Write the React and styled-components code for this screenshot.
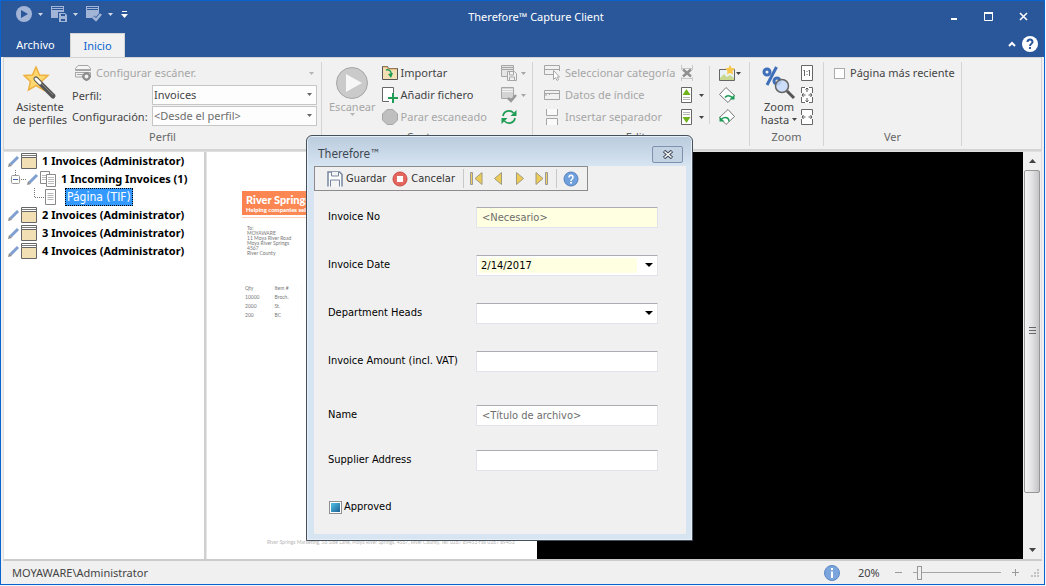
import React from "react";
import styled, { createGlobalStyle, css } from "styled-components";

const Global = createGlobalStyle`
  *, *::before, *::after { box-sizing: border-box; }
  body { margin: 0; background: #fff; }
  button, input, select { font: inherit; color: inherit; margin: 0; }
  button { border: 0; padding: 0; background: none; }
  svg { display: block; flex: none; }
`;

const Desktop = styled.div`
  min-height: 100vh;
  padding: 0 1px 1px 0;
  display: flex;
  background: #eef4fb;
  font: 11px/14px "Noto Sans", "Open Sans", sans-serif;
  color: #444;
`;
const Window = styled.div`
  position: relative;
  flex: 1;
  min-width: 0;
  display: flex;
  flex-direction: column;
  border: 1px solid #0a64cf;
  background: #f0f0f0;
`;

/* Title bar and tabs */
const TitleBar = styled.header`
  display: flex;
  align-items: center;
  height: 32px;
  background: #2a579a;
  color: #fff;
`;
const QuickBar = styled.div`
  display: flex;
  align-items: center;
  height: 26px;
  align-self: flex-start;
  padding-left: 15px;
  gap: 8px;
  width: 135px;
`;
const QuickButton = styled.button`
  display: flex;
  align-items: center;
  gap: 6px;
  color: #a3b5d6;
`;
const Title = styled.h1`
  flex: 1;
  margin: 0;
  text-align: center;
  font-size: 11px;
  font-weight: 400;
`;
const WindowControls = styled.div`
  display: flex;
  width: 108px;
  padding-right: 3px;
`;
const ControlButton = styled.button`
  flex: 1;
  display: flex;
  justify-content: center;
`;
const TabBar = styled.nav`
  display: flex;
  height: 24px;
  padding-right: 6px;
  background: #2a579a;
  color: #fff;
`;
const Tab = styled.button`
  height: 24px;
  padding: 0 14px;
  min-width: 55px;
  ${(p) =>
    p.$active
      ? css`
          background: #f1f1f1;
          border: 1px solid #d4d4d4;
          border-bottom: 0;
          padding: 0 12px;
          color: #0a64cf;
        `
      : css`
          width: 69px;
        `}
`;
const TabTools = styled.div`
  margin-left: auto;
  display: flex;
  align-items: center;
  gap: 6px;
  height: 21px;
`;

/* Ribbon */
const Ribbon = styled.section`
  display: flex;
  height: 94px;
  margin: 0 2px;
  padding: 4px 0 3px;
  background: #f1f1f1;
  border: solid #d4d4d4;
  border-width: 1px 1px 2px;
`;
const Group = styled.div`
  display: flex;
  flex-direction: column;
  flex: 0 0 ${(p) => p.$width}px;
  min-width: 0;
  border-right: 1px solid #d4d4d4;
`;
const GroupBody = styled.div`
  display: flex;
  flex: 1;
  padding: ${(p) => p.$pad || "0 8px"};
`;
const GroupLabel = styled.div`
  text-align: center;
  color: #666;
  height: 16px;
`;
const BigButton = styled.button`
  display: flex;
  flex-direction: column;
  align-items: center;
  justify-content: flex-start;
  flex: 0 0 ${(p) => p.$width}px;
  padding-top: 4px;
  line-height: 13px;
  white-space: nowrap;
  color: ${(p) => (p.disabled ? "#a6a6a6" : "#444")};
`;
const BigCaption = styled.span`
  display: flex;
  align-items: center;
  gap: 3px;
`;
const Column = styled.div`
  display: flex;
  flex-direction: column;
  margin-left: ${(p) => p.$indent || 0}px;
  ${(p) => p.$width && `flex: 0 0 ${p.$width}px;`}
`;
const Divider = styled.div`
  width: 1px;
  height: 58px;
  margin: 4px 9px 0 5px;
  background: #d4d4d4;
`;
const Command = styled.button`
  display: flex;
  align-items: center;
  gap: ${(p) => p.$gap || 3}px;
  height: 22px;
  white-space: nowrap;
  color: ${(p) => (p.disabled ? "#a6a6a6" : "#444")};
`;
const ScannerCommand = styled(Command)`
  padding-left: 3px;
`;
const PushRight = styled.span`
  margin-left: auto;
  padding-right: 3px;
`;
const FormRow = styled.div`
  display: flex;
  align-items: center;
  height: 21px;
`;
const FormLabel = styled.label`
  flex: 0 0 80px;
  padding-top: 2px;
`;
const SelectBox = styled.div`
  position: relative;
  flex: 1;
  display: flex;
`;
const RibbonSelect = styled.select`
  appearance: none;
  width: 100%;
  height: 20px;
  padding: 1px 1px 0;
  border: 1px solid #c6c6c6;
  border-radius: 0;
  background: #fdfdfd;
  color: ${(p) => (p.$muted ? "#6d6d6d" : "#444")};
`;
const SelectArrow = styled.span`
  position: absolute;
  right: 5px;
  top: 8px;
  pointer-events: none;
`;
const CheckLabel = styled.label`
  display: flex;
  align-items: center;
  gap: 5px;
  height: 22px;
  white-space: nowrap;
`;
const SquareCheck = styled.input`
  appearance: none;
  width: 11px;
  height: 11px;
  border: 1px solid #ababab;
  background: #fff;
`;

/* Work area */
const Work = styled.main`
  flex: 1;
  display: flex;
  margin: 0 2px;
  border: 1px solid #e0e0e0;
  border-bottom: 2px solid #cbcbcb;
`;
const TreePane = styled.div`
  flex: 0 0 200px;
  background: #fff;
  font: 700 11px/18px "Noto Sans", sans-serif;
  color: #000;
`;
const TreeList = styled.ul`
  list-style: none;
  margin: 0;
  padding: 0;
`;
const TreeRow = styled.div`
  display: flex;
  align-items: center;
  height: 18px;
  padding-left: 4px;
  gap: 1px;
  white-space: nowrap;
`;
const TreeText = styled.span`
  padding-left: 4px;
`;
const Selected = styled.span`
  margin-left: 7px;
  padding: 0 1px;
  border: 1px dotted #000;
  background: #3399ff;
  color: #fff;
  font: 400 12px/16px "DejaVu Sans Condensed", sans-serif;
`;
const Splitter = styled.div`
  width: 3px;
  background: #cfcfcf;
  border-right: 1px solid #e6e6e6;
`;
const Viewer = styled.div`
  flex: 1;
  min-width: 0;
  display: flex;
  background: #000;
`;
const Paper = styled.article`
  flex: 0 0 330px;
  display: flex;
  flex-direction: column;
  padding: 39px 0 14px 35px;
  background: #fff;
  font: 5px/5px Lato, sans-serif;
  color: #777;
`;
const Letterhead = styled.div`
  padding: 3px 4px;
  height: 24px;
  background: linear-gradient(90deg, #fc8350, #fda062);
  color: #fff;
  font: 900 11px/12px Lato, sans-serif;
`;
const Tagline = styled.div`
  font-size: 6px;
  line-height: 8px;
  white-space: nowrap;
`;
const Rule = styled.div`
  height: 1px;
  margin: 2px 0 8px;
  background: #fcd0b8;
`;
const Address = styled.address`
  padding-left: 5px;
  font-style: normal;
`;
const ItemTable = styled.table`
  align-self: flex-start;
  margin: 28px 0 0 1px;
  border-collapse: collapse;
  td, th {
    width: 29px;
    height: 9px;
    padding: 0 2px;
    font-weight: 400;
    text-align: left;
    border-right: 1px solid #fafafa;
  }
`;
const PaperFooter = styled.footer`
  margin-top: auto;
  padding-left: 25px;
  white-space: nowrap;
  color: #b5b5b5;
`;
const Scrollbar = styled.div`
  display: flex;
  flex-direction: column;
  width: 18px;
  padding: 0 1px;
  background: #f0f0f0;
`;
const ScrollButton = styled.button`
  height: 18px;
  display: flex;
  align-items: center;
  justify-content: center;
`;
const ScrollTrack = styled.div`
  flex: 1;
  display: grid;
  grid-template-rows: 87fr 13fr;
`;
const ScrollThumb = styled.div`
  display: flex;
  align-items: center;
  justify-content: center;
  border: 1px solid #979797;
  border-radius: 2px;
  background: linear-gradient(90deg, #f5f5f5, #e2e2e5 50%, #c4c4c8);
`;

/* Status bar */
const StatusBar = styled.footer`
  display: flex;
  align-items: center;
  height: 23px;
  padding: 0 5px 0 11px;
`;
const StatusTools = styled.div`
  margin-left: auto;
  display: flex;
  align-items: center;
`;
const Percent = styled.output`
  width: 36px;
  margin-left: 18px;
`;
const Slider = styled.input`
  appearance: none;
  width: 88px;
  height: 15px;
  margin: 0 10px;
  background: linear-gradient(#a6a6a6, #a6a6a6) center / 100% 1px no-repeat;
  &::-webkit-slider-thumb {
    appearance: none;
    width: 5px;
    height: 14px;
    border: 1px solid #999;
    background: #f0f0f0;
  }
`;

/* Index data dialog */
const Dialog = styled.section`
  position: absolute;
  left: 305px;
  top: 134px;
  width: 387px;
  padding: 0 6px 6px;
  border: 1px solid #46505a;
  border-radius: 6px 6px 0 0;
  background: linear-gradient(#b9cbdd, #d7e4f2 30px);
  box-shadow: inset 0 0 0 1px #e6eef7;
  font: 11px/14px "DejaVu Sans Condensed", sans-serif;
  color: #000;
`;
const DialogHeader = styled.header`
  display: flex;
  align-items: center;
  justify-content: space-between;
  height: 30px;
  padding: 6px 3px 0 5px;
  color: #3c4650;
`;
const DialogTitle = styled.h2`
  margin: 0;
  font-size: 12px;
  font-weight: 400;
`;
const CloseButton = styled.button`
  display: flex;
  align-items: center;
  justify-content: center;
  width: 31px;
  height: 17px;
  border: 1px solid #7f91ad;
  border-radius: 2px;
  background: #c3d3e4;
`;
const DialogBody = styled.div`
  margin-left: 1px;
  background: #f0f0f0;
`;
const Toolbar = styled.div`
  display: flex;
  align-items: center;
  height: 25px;
  width: 274px;
  padding: 0 5px 0 12px;
  border: 1px solid #8c8c8c;
`;
const ToolButton = styled.button`
  display: flex;
  align-items: center;
  gap: 3px;
  color: #333;
  margin-right: ${(p) => p.$after || 0}px;
`;
const ToolSeparator = styled.span`
  flex: none;
  width: 1px;
  height: 19px;
  margin-right: 6px;
  background: #c8c8c8;
`;
const Form = styled.form`
  display: flex;
  flex-direction: column;
  padding: 16px 28px 20px 14px;
`;
const Field = styled.div`
  display: flex;
  margin-bottom: ${(p) => p.$after || 27}px;
`;
const FieldLabel = styled.label`
  flex: 0 0 148px;
  padding-top: 3px;
`;
const fieldBox = css`
  width: 100%;
  height: 21px;
  border: 1px solid #e2e3ea;
  border-top-color: #abadb3;
  border-radius: 1px;
  background: #fff;
`;
const TextInput = styled.input`
  ${fieldBox}
  padding: 0 5px;
  ${(p) => p.required && "background: #ffffe1;"}
  &::placeholder { color: #6d6d6d; opacity: 1; }
`;
const FieldSelect = styled.select`
  ${fieldBox}
  appearance: none;
  padding: 0 4px;
  ${(p) =>
    p.required &&
    "background: linear-gradient(#ffffe1, #ffffe1) 2px 2px / calc(100% - 22px) 15px no-repeat #fff;"}
`;
const ApprovedLabel = styled.label`
  display: flex;
  align-items: center;
  gap: 2px;
  padding: 2px 1px 0;
`;
const MixedCheck = styled.input`
  appearance: none;
  width: 13px;
  height: 13px;
  border: 1px solid #8e8f8f;
  background: linear-gradient(135deg, #52c3e8, #1d5f93) center / 9px 9px no-repeat #fff;
`;

/* Icons */
const Arrow = ({ color = "#666", size = 5 }) => (
  <svg width={size} height={Math.ceil(size / 2)} viewBox="0 0 6 3" preserveAspectRatio="none">
    <path d="M0 0h6L3 3z" fill={color} />
  </svg>
);
const Svg = ({ w = 16, h = 16, children }) => (
  <svg width={w} height={h} viewBox={`0 0 ${w} ${h}`} fill="none">
    {children}
  </svg>
);
const PlaySmall = () => (
  <Svg>
    <circle cx="8" cy="8" r="8" fill="currentColor" />
    <path d="M5 4l7 4-7 4z" fill="#2a579a" />
  </Svg>
);
const SaveProfile = () => (
  <Svg>
    <path d="M.5.5h12v11H.5zM0 2.500h13M0 4.500h13" fill="#e4e4e4" stroke="#a6a6a6" />
    <path d="M6.500 6.500h7l2 2v7h-9z" fill="#f1f1f1" stroke="#a6a6a6" />
    <path d="M8.500 7v3h4V7M8.500 15v-3h5v3" stroke="#a6a6a6" />
  </Svg>
);
const CheckProfile = () => (
  <Svg>
    <path d="M.5.5h12v11H.5z" fill="#d4d4d4" stroke="#a6a6a6" />
    <path d="M1 2.500h11M1 4.500h11" stroke="#f1f1f1" />
    <path d="M7 11l3 3 5-6" stroke="#999" strokeWidth="2.500" />
  </Svg>
);
const QuickSave = () => (
  <Svg>
    <path d="M0 0h13v6H7v6H0z" fill="currentColor" />
    <path d="M1 1.500h11M1 3.500h11" stroke="#2a579a" />
    <path d="M8 7h6l2 2v7H8z" fill="currentColor" />
    <path d="M10 8h4v2h-4zM10 13h4v2h-4z" fill="#2a579a" />
  </Svg>
);
const QuickCheck = () => (
  <Svg>
    <path d="M0 0h13v12H0z" fill="currentColor" />
    <path d="M1 1.500h11M1 3.500h11" stroke="#2a579a" />
    <path d="M7 11l3 3 5-6" stroke="#2a579a" strokeWidth="4" />
    <path d="M7 11l3 3 5-6" stroke="currentColor" strokeWidth="2.500" />
  </Svg>
);
const Wand = () => (
  <Svg w={34} h={34}>
    <path d="M13 1l3.500 8 8.500.5-6.500 6 2 8.500-7.500-4.500L5.500 24l2-8.500-6.500-6L9.500 9z" fill="#fdd870" stroke="#eeb040" strokeWidth="1.500" />
    <path d="M13 13l17 17" stroke="#555" strokeWidth="5" strokeLinecap="round" />
    <path d="M13 13l4 4" stroke="#fff" strokeWidth="3" strokeLinecap="round" />
    <path d="M19 18l11 11" stroke="#888" />
  </Svg>
);
const Scanner = () => (
  <Svg>
    <path d="M3 .5h10l2.500 3v2H.5v-2z" stroke="#a6a6a6" fill="#f4f4f4" />
    <path d="M1 4.500h14M.5 7.500h15v3M.5 7v5H8M2 9.500h6" stroke="#a6a6a6" />
    <circle cx="11.500" cy="11.500" r="3" stroke="#8c8c8c" strokeWidth="2" fill="#f1f1f1" />
    <path d="M11.500 7v1M11.500 15v1M7 11.500h1M15 11.500h1" stroke="#8c8c8c" strokeWidth="2" />
  </Svg>
);
const ScanBig = () => (
  <Svg w={34} h={34}>
    <circle cx="17" cy="17" r="15.500" fill="#cacaca" stroke="#a6a6a6" />
    <path d="M11 8l16 9-16 9z" fill="#f7f7f7" />
  </Svg>
);
const ImportIcon = () => (
  <Svg>
    <path d="M.5 14.500v-13h5l1 2h9v11z" fill="#f3dfb4" stroke="#555" />
    <path d="M1 2h4l1 2h9" stroke="#d9a05a" />
    <path d="M4 5c4-1 6 2 5 6" stroke="#1f9c55" strokeWidth="1.500" />
    <path d="M6 9l3 4 2-5z" fill="#1f9c55" />
  </Svg>
);
const AddFile = () => (
  <Svg>
    <path d="M.5.5h11v15H.5z" fill="#fff" />
    <path d="M11.500 6V.5H.5v14H7" stroke="#666" />
    <path d="M11 6v10M6 11h10" stroke="#1f9c55" strokeWidth="2" />
  </Svg>
);
const StopIcon = () => (
  <Svg>
    <path d="M5 .5h6L15.500 5v6L11 15.500H5L.5 11V5z" fill="#bfbfbf" stroke="#a6a6a6" />
  </Svg>
);
const Refresh = () => (
  <Svg>
    <path d="M2 7a6 6 0 0 1 10.500-3M14 9a6 6 0 0 1-10.500 3" stroke="#1f9c55" strokeWidth="1.700" />
    <path d="M15.500 1v6h-6zM.5 15V9h6z" fill="#1f9c55" />
  </Svg>
);
const Category = () => (
  <Svg>
    <path d="M9 9.500H.5v-9h15V6M1 4.500h14" stroke="#a6a6a6" />
    <path d="M9.500 5.500v9l2-2 1.500 3 1.500-1-1.500-2.500h2.500z" fill="#fff" stroke="#a6a6a6" />
  </Svg>
);
const IndexData = () => (
  <Svg>
    <path d="M.5 3.500h15v9H.5zM.5 6.500h15M5.500 6v2M2 6v3" stroke="#a6a6a6" />
  </Svg>
);
const SeparatorIcon = () => (
  <Svg>
    <path d="M2.500 0v6.500h11V0M2.500 16V9.500h11V16" fill="#fafafa" stroke="#a6a6a6" />
  </Svg>
);
const DeletePage = () => (
  <Svg w={12}>
    <path d="M.5 0v5M11.500 0v5M.5 16v-4M11.500 16v-4M.5 3.500h11M.5 13.500h11" stroke="#c8c8c8" />
    <path d="M2 4.500l8 7M10 4.500l-8 7" stroke="#8f8f8f" strokeWidth="2.500" />
  </Svg>
);
const PageMove = ({ down }) => (
  <Svg w={11}>
    <path d="M.5.5h10v15H.5z" fill="#fff" stroke="#666" />
    {down ? (
      <>
        <path d="M2 3.500h7M2 5.500h7" stroke="#b5b5b5" />
        <path d="M1.500 8h8l-4 6z" fill="#6fb31c" />
      </>
    ) : (
      <>
        <path d="M2 10.500h7M2 12.500h7" stroke="#b5b5b5" />
        <path d="M1.500 8h8l-4-6z" fill="#6fb31c" />
      </>
    )}
  </Svg>
);
const Picture = () => (
  <Svg>
    <path d="M.5 4.500h15v11H.5z" fill="#eaf3fa" stroke="#666" />
    <path d="M1 13l4-4 3 3 3-2 4 3v2H1z" fill="#c9d890" />
    <path d="M11 0l1.500 3 3.500.5-2.500 2.500.5 3.500-3-1.500-3 1.500.5-3.500L6 3.500 9.500 3z" fill="#f9c74a" />
  </Svg>
);
const RotateRight = () => (
  <Svg>
    <path d="M.5 7.500L7 .5l8.500 8L9 15.500z" fill="#fff" stroke="#777" />
    <path d="M6 10.500c2-2.500 4-2.500 8 .5" stroke="#1f9c55" strokeWidth="1.500" />
    <path d="M15.500 7.500v5h-5z" fill="#1f9c55" />
  </Svg>
);
const RotateLeft = () => (
  <Svg>
    <path d="M15.500 7.500L9 .5l-8.500 8L7 15.500z" fill="#fff" stroke="#777" />
    <path d="M10 12.500c0-4-4-5-7.500-2.500" stroke="#1f9c55" strokeWidth="1.500" />
    <path d="M.5 7.500v5h5z" fill="#1f9c55" />
  </Svg>
);
const ZoomIcon = () => (
  <Svg w={34} h={34}>
    <circle cx="5" cy="6" r="3" stroke="#3f6fb8" strokeWidth="3" />
    <path d="M14.500 1L5 19" stroke="#3f6fb8" strokeWidth="3" />
    <circle cx="15" cy="15" r="3" stroke="#3f6fb8" strokeWidth="3" />
    <circle cx="20" cy="20" r="6.500" fill="#c6dafa" fillOpacity=".85" stroke="#666" strokeWidth="1.500" />
    <path d="M25 25l7 7" stroke="#555" strokeWidth="3" />
  </Svg>
);
const Fit = ({ kind }) => (
  <Svg w={12}>
    <path d="M.5.5h11v15H.5z" fill="#fff" stroke="#666" />
    {kind === "one" && <path d="M3.500 5v6M8.500 5v6M2.500 5.500h1M7.500 5.500h1M5.500 6.500h1M5.500 9.500h1" stroke="#666" />}
    {kind !== "one" && <path d="M.5 6v4M11.500 6v4" stroke="#fff" />}
    {kind === "page" && <path d="M4 .5h4M4 15.500h4" stroke="#fff" />}
    {kind !== "one" && <path d="M1 8h3.500M11 8H7.500M2.500 6L1 8l1.500 2M9.500 6L11 8l-1.500 2" stroke="#555" />}
    {kind === "page" && <path d="M6 1v4M6 15v-4M4.500 2.500L6 1l1.500 1.500M4.500 13.500L6 15l1.500-1.500" stroke="#555" />}
  </Svg>
);
const HelpWhite = () => (
  <Svg>
    <circle cx="8" cy="8" r="8" fill="#fff" />
    <path d="M5.500 6c0-3.500 5-3.500 5 0 0 2-2.500 1.500-2.500 4" stroke="#2a579a" strokeWidth="2" />
    <path d="M7 11h2v2H7z" fill="#2a579a" />
  </Svg>
);
const HelpBlue = () => (
  <Svg>
    <circle cx="8" cy="8" r="7" fill="#6ea0dc" stroke="#5580bd" />
    <path d="M6 6.500c0-3 4-3 4 0C10 8 8 8 8 10" stroke="#fff" strokeWidth="1.500" />
    <path d="M7 11h2v1.500H7z" fill="#fff" />
  </Svg>
);
const Pencil = () => (
  <Svg w={12} h={12}>
    <path d="M2.500 9.500L10 2" stroke="#7f9fd0" strokeWidth="3" />
    <path d="M0 12l1-4 3 3z" fill="#8c8c8c" />
  </Svg>
);
const CaseIcon = () => (
  <Svg>
    <path d="M.5.5h15v4H.5z" fill="#fff" stroke="#666" />
    <path d="M1 2.500h14" stroke="#777" />
    <path d="M.5 4.500h15v11H.5z" fill="#f3dfb4" stroke="#666" />
  </Svg>
);
const DocsIcon = () => (
  <Svg>
    <path d="M.5.5h9v12h-9z" fill="#fff" stroke="#888" />
    <path d="M2 4.500h4M2 6.500h4M2 8.500h4" stroke="#bbb" />
    <path d="M6.500 3.500h9v12h-9z" fill="#fff" stroke="#888" />
    <path d="M8 6.500h6M8 8.500h6M8 10.500h6M8 12.500h6" stroke="#bbb" />
  </Svg>
);
const DocIcon = () => (
  <Svg w={12}>
    <path d="M.5.5h10v15H.5z" fill="#fff" stroke="#888" />
    <path d="M2.500 4.500h6M2.500 6.500h6M2.500 8.500h6M2.500 10.500h6" stroke="#b5b5b5" />
  </Svg>
);
const BranchOpen = () => (
  <Svg w={18} h={18}>
    <path d="M7.500 0v6M13 9.500h5" stroke="#777" strokeDasharray="1 1" />
    <rect x="3.500" y="5.500" width="8" height="8" rx="1" fill="#fff" stroke="#999" />
    <path d="M5 9.500h5" stroke="#3b66b0" />
  </Svg>
);
const BranchEnd = () => (
  <Svg w={36} h={18}>
    <path d="M26.500 0v9.500H36" stroke="#777" strokeDasharray="1 1" />
  </Svg>
);
const SaveIcon = () => (
  <Svg>
    <path d="M1 15.500V1h11.500l2.500 2.500v12" fill="#fff" stroke="#75859f" strokeWidth="1.500" />
    <path d="M4.500 1v4h7V1M3.500 15.500V9h9v6.500" stroke="#75859f" fill="#f4f4f4" />
  </Svg>
);
const CancelIcon = () => (
  <Svg>
    <circle cx="8" cy="8" r="7" fill="#e3665f" stroke="#c94a45" />
    <path d="M5 5h6v6H5z" fill="#fff" />
  </Svg>
);
const Nav = ({ back, bar }) => (
  <Svg w={13} h={13}>
    <g transform={back ? undefined : "translate(13) scale(-1 1)"}>
      {bar && <path d="M.5.5h2v12h-2z" fill="#edcf62" stroke="#999" />}
      <path d={bar ? "M12 .5v12l-7-6z" : "M10.500.5v12l-7-6z"} fill="#edcc55" stroke="#a09a80" />
    </g>
  </Svg>
);
const InfoIcon = () => (
  <Svg>
    <circle cx="8" cy="8" r="7.500" fill="#7ba5dc" stroke="#5d87c4" />
    <path d="M7 3h2v2H7zM7 6.500h2V13H7z" fill="#fff" />
  </Svg>
);
const Grip = () => (
  <Svg w={8} h={8}>
    <path d="M6 0h2v2H6zM3 3h2v2H3zM6 3h2v2H6zM0 6h2v2H0zM3 6h2v2H3zM6 6h2v2H6z" fill="#c4c4c4" />
  </Svg>
);

const QuickAccess = () => (
  <QuickBar>
    <QuickButton aria-label="Escanear"><PlaySmall /><Arrow color="#d0d8e8" /></QuickButton>
    <QuickButton aria-label="Guardar perfil"><QuickSave /><Arrow color="#d0d8e8" /></QuickButton>
    <QuickButton aria-label="Aplicar perfil"><QuickCheck /><Arrow color="#d0d8e8" /></QuickButton>
    <QuickButton aria-label="Personalizar">
      <Svg w={7} h={7}><path d="M1 .5h5" stroke="#fff" /><path d="M0 3h7L3.500 7z" fill="#fff" /></Svg>
    </QuickButton>
  </QuickBar>
);

const folders = ["2", "3", "4"];

const FolderRow = ({ number }) => (
  <TreeRow>
    <Pencil /><CaseIcon /><TreeText>{number} Invoices (Administrator)</TreeText>
  </TreeRow>
);

export default function App() {
  return (
    <Desktop>
      <Global />
      <Window>
        <TitleBar>
          <QuickAccess />
          <Title>Therefore™ Capture Client</Title>
          <WindowControls>
            <ControlButton aria-label="Minimizar"><Svg w={10} h={10}><path d="M2 7h6" stroke="#fff" strokeWidth="2" /></Svg></ControlButton>
            <ControlButton aria-label="Maximizar"><Svg w={10} h={10}><path d="M.5 1.500h8v7h-8z" stroke="#fff" /><path d="M0 1h9" stroke="#fff" strokeWidth="2" /></Svg></ControlButton>
            <ControlButton aria-label="Cerrar"><Svg w={10} h={10}><path d="M1 1l7 7M8 1L1 8" stroke="#fff" strokeWidth="1.500" /></Svg></ControlButton>
          </WindowControls>
        </TitleBar>
        <TabBar>
          <Tab>Archivo</Tab>
          <Tab $active>Inicio</Tab>
          <TabTools>
            <button aria-label="Contraer"><Svg w={8} h={6}><path d="M1 5l3-3 3 3" stroke="#fff" strokeWidth="2" /></Svg></button>
            <button aria-label="Ayuda"><HelpWhite /></button>
          </TabTools>
        </TabBar>

        <Ribbon>
          <Group $width={318}>
            <GroupBody $pad="0 3px 0 8px">
              <BigButton $width={56}><Wand /><span>Asistente</span><span>de perfiles</span></BigButton>
              <Column $width={245} $indent={4}>
                <ScannerCommand disabled $gap={5}>
                  <Scanner />Configurar escáner.
                  <PushRight><Arrow color="#b5b5b5" /></PushRight>
                </ScannerCommand>
                <FormRow>
                  <FormLabel htmlFor="perfil">Perfil:</FormLabel>
                  <SelectBox>
                    <RibbonSelect id="perfil"><option>Invoices</option></RibbonSelect>
                    <SelectArrow><Arrow /></SelectArrow>
                  </SelectBox>
                </FormRow>
                <FormRow>
                  <FormLabel htmlFor="config">Configuración:</FormLabel>
                  <SelectBox>
                    <RibbonSelect id="config" $muted><option>&lt;Desde el perfil&gt;</option></RibbonSelect>
                    <SelectArrow><Arrow /></SelectArrow>
                  </SelectBox>
                </FormRow>
              </Column>
            </GroupBody>
            <GroupLabel>Perfil</GroupLabel>
          </Group>

          <Group $width={211}>
            <GroupBody $pad="0 7px">
              <BigButton $width={44} disabled><ScanBig /><span>Escanear</span><Arrow color="#b5b5b5" /></BigButton>
              <Column $width={104} $indent={6}>
                <Command>
                  <ImportIcon />Importar
                </Command>
                <Command>
                  <AddFile />Añadir fichero
                </Command>
                <Command disabled>
                  <StopIcon />Parar escaneado
                </Command>
              </Column>
              <Divider />
              <Column>
                <Command disabled aria-label="Guardar" $gap={4}><SaveProfile /><Arrow color="#a6a6a6" /></Command>
                <Command disabled aria-label="Aplicar" $gap={4}><CheckProfile /><Arrow color="#a6a6a6" /></Command>
                <Command aria-label="Actualizar"><Refresh /></Command>
              </Column>
            </GroupBody>
            <GroupLabel>Captura</GroupLabel>
          </Group>

          <Group $width={217}>
            <GroupBody $pad="0 7px 0 11px">
              <Column $width={137}>
                <Command disabled $gap={5}><Category />Seleccionar categoría</Command>
                <Command disabled $gap={5}><IndexData />Datos de índice</Command>
                <Command disabled $gap={5}><SeparatorIcon />Insertar separador</Command>
              </Column>
              <Column>
                <Command disabled aria-label="Eliminar"><DeletePage /></Command>
                <Command aria-label="Subir" $gap={7}><PageMove /><Arrow color="#444" /></Command>
                <Command aria-label="Bajar" $gap={7}><PageMove down /><Arrow color="#444" /></Command>
              </Column>
              <Divider />
              <Column>
                <Command aria-label="Imagen" $gap={1}><Picture /><Arrow color="#444" /></Command>
                <Command aria-label="Girar a la derecha"><RotateRight /></Command>
                <Command aria-label="Girar a la izquierda"><RotateLeft /></Command>
              </Column>
            </GroupBody>
            <GroupLabel>Editar</GroupLabel>
          </Group>

          <Group $width={74}>
            <GroupBody $pad="0 7px">
              <BigButton $width={44}>
                <ZoomIcon /><span>Zoom</span>
                <BigCaption>hasta <Arrow color="#444" /></BigCaption>
              </BigButton>
              <Column>
                <Command aria-label="Tamaño real"><Fit kind="one" /></Command>
                <Command aria-label="Ajustar página"><Fit kind="page" /></Command>
                <Command aria-label="Ajustar ancho"><Fit kind="width" /></Command>
              </Column>
            </GroupBody>
            <GroupLabel>Zoom</GroupLabel>
          </Group>

          <Group $width={138}>
            <GroupBody $pad="0 10px">
              <CheckLabel><SquareCheck type="checkbox" />Página más reciente</CheckLabel>
            </GroupBody>
            <GroupLabel>Ver</GroupLabel>
          </Group>
        </Ribbon>

        <Work>
          <TreePane>
            <TreeList>
              <li>
                <FolderRow number="1" />
                <TreeList>
                  <li>
                    <TreeRow><BranchOpen /><Pencil /><DocsIcon /><TreeText>1 Incoming Invoices (1)</TreeText></TreeRow>
                    <TreeList>
                      <li><TreeRow><BranchEnd /><DocIcon /><Selected>Página (TIF)</Selected></TreeRow></li>
                    </TreeList>
                  </li>
                </TreeList>
              </li>
              {folders.map((n) => (
                <li key={n}><FolderRow number={n} /></li>
              ))}
            </TreeList>
          </TreePane>
          <Splitter />
          <Viewer>
            <Paper>
              <Letterhead>
                River Springs
                <Tagline>Helping companies sell more</Tagline>
              </Letterhead>
              <Rule />
              <Address>
                To:<br />MOYAWARE<br />11 Moya River Road<br />Moya River Springs<br />4567<br />River County
              </Address>
              <ItemTable>
                <thead><tr><th>Qty</th><th>Item #</th></tr></thead>
                <tbody>
                  <tr><td>10000</td><td>Broch.</td></tr>
                  <tr><td>2000</td><td>St.</td></tr>
                  <tr><td>200</td><td>BC</td></tr>
                </tbody>
              </ItemTable>
              <PaperFooter>
                River Springs Marketing, 56 Side Lane, Moya River Springs, 4567, River County, Tel: 0287 89453 Fax 0287 89453
              </PaperFooter>
            </Paper>
          </Viewer>
          <Scrollbar>
            <ScrollButton aria-label="Arriba"><Svg w={7} h={4}><path d="M0 4h7L3.500 0z" fill="#444" /></Svg></ScrollButton>
            <ScrollTrack>
              <ScrollThumb><Svg w={7} h={8}><path d="M0 .5h7M0 3.500h7M0 6.500h7" stroke="#666" /></Svg></ScrollThumb>
            </ScrollTrack>
            <ScrollButton aria-label="Abajo"><Svg w={7} h={4}><path d="M0 0h7L3.500 4z" fill="#444" /></Svg></ScrollButton>
          </Scrollbar>
        </Work>

        <StatusBar>
          <span>MOYAWARE\Administrator</span>
          <StatusTools>
            <InfoIcon />
            <Percent>20%</Percent>
            <button aria-label="Alejar"><Svg w={9} h={9}><path d="M1 4.500h7" stroke="#999" /></Svg></button>
            <Slider type="range" min="0" max="100" defaultValue="5" aria-label="Zoom" />
            <button aria-label="Acercar"><Svg w={20} h={9}><path d="M1 4.500h7M4.500 1v7" stroke="#999" /></Svg></button>
            <Grip />
          </StatusTools>
        </StatusBar>

        <Dialog role="dialog" aria-label="Therefore">
          <DialogHeader>
            <DialogTitle>Therefore™</DialogTitle>
            <CloseButton aria-label="Cerrar">
              <Svg w={12} h={9}>
                <path d="M2 1l8 7M10 1L2 8" stroke="#3f4a5a" strokeWidth="3.500" />
                <path d="M2.500 1.500l7 6M9.500 1.500l-7 6" stroke="#fff" strokeWidth="1.500" />
              </Svg>
            </CloseButton>
          </DialogHeader>
          <DialogBody>
            <Toolbar>
              <ToolButton $after={6}><SaveIcon />Guardar</ToolButton>
              <ToolButton $after={8}><CancelIcon />Cancelar</ToolButton>
              <ToolSeparator />
              <ToolButton $after={8} aria-label="Primero"><Nav back bar /></ToolButton>
              <ToolButton $after={10} aria-label="Anterior"><Nav back /></ToolButton>
              <ToolButton $after={8} aria-label="Siguiente"><Nav /></ToolButton>
              <ToolButton $after={8} aria-label="Último"><Nav bar /></ToolButton>
              <ToolSeparator />
              <ToolButton aria-label="Ayuda"><HelpBlue /></ToolButton>
            </Toolbar>
            <Form onSubmit={(e) => e.preventDefault()}>
              <Field>
                <FieldLabel htmlFor="number">Invoice No</FieldLabel>
                <TextInput id="number" required placeholder="<Necesario>" />
              </Field>
              <Field>
                <FieldLabel htmlFor="date">Invoice Date</FieldLabel>
                <SelectBox>
                  <FieldSelect id="date" required><option>2/14/2017</option></FieldSelect>
                  <SelectArrow><Arrow color="#000" size={8} /></SelectArrow>
                </SelectBox>
              </Field>
              <Field>
                <FieldLabel htmlFor="heads">Department Heads</FieldLabel>
                <SelectBox>
                  <FieldSelect id="heads"><option></option></FieldSelect>
                  <SelectArrow><Arrow color="#000" size={8} /></SelectArrow>
                </SelectBox>
              </Field>
              <Field $after={33}>
                <FieldLabel htmlFor="amount">Invoice Amount (incl. VAT)</FieldLabel>
                <TextInput id="amount" />
              </Field>
              <Field $after={24}>
                <FieldLabel htmlFor="name">Name</FieldLabel>
                <TextInput id="name" placeholder="<Título de archivo>" />
              </Field>
              <Field>
                <FieldLabel htmlFor="address">Supplier Address</FieldLabel>
                <TextInput id="address" />
              </Field>
              <ApprovedLabel><MixedCheck type="checkbox" />Approved</ApprovedLabel>
            </Form>
          </DialogBody>
        </Dialog>
      </Window>
    </Desktop>
  );
}
